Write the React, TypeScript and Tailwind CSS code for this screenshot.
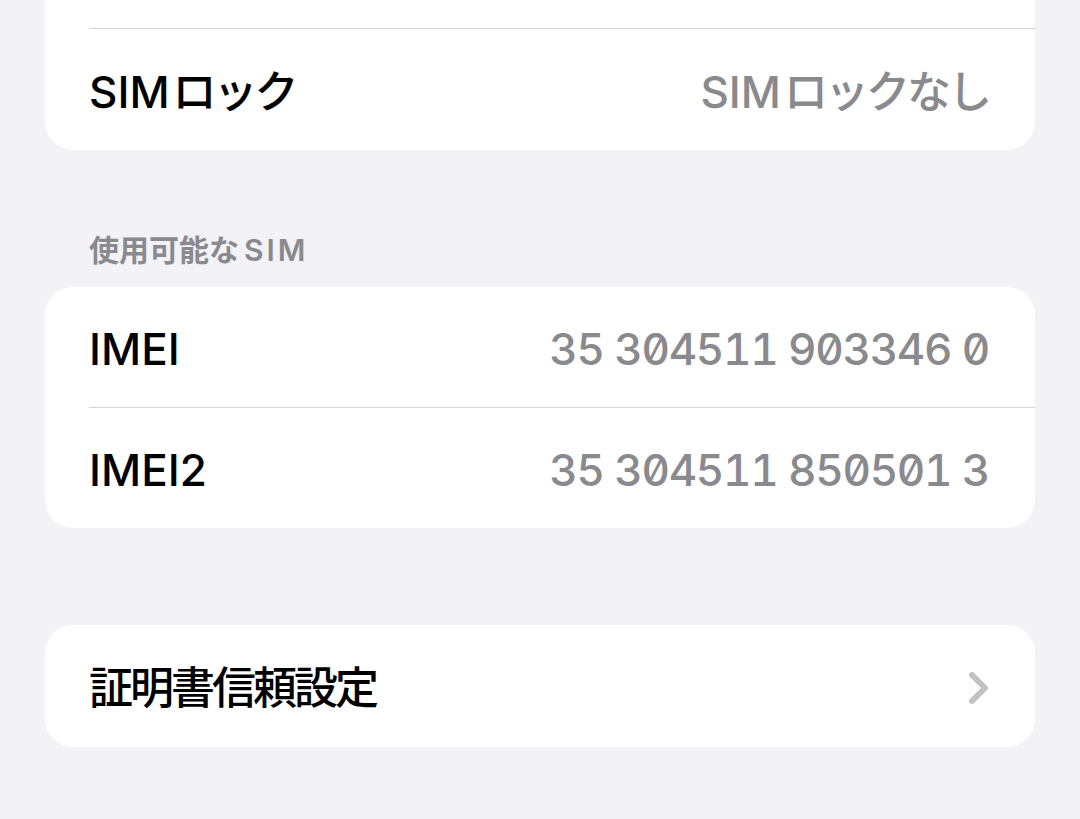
import React from 'react';

const font = { fontFamily: '"Inter", "Noto Sans CJK JP", sans-serif' };

const Row = ({ label, value, mono = false, chevron = false, divider = false, height = 'h-[120px]' }: {
  label: React.ReactNode;
  value?: React.ReactNode;
  mono?: boolean;
  chevron?: boolean;
  divider?: boolean;
  height?: string;
}) => (
  <div className="pl-[44px]">
    <div className={`${height} flex items-center justify-between pr-[46px] pt-[4px] ${divider ? 'border-t border-[#d4d4d8]' : ''}`}>
      <span className="text-[44px] font-medium text-black leading-none">{label}</span>
      {value && (
        <span
          className={`text-[44px] font-medium text-[#8a8a8e] leading-none ${mono ? 'tabular-nums slashed-zero tracking-[-1.3px]' : ''}`}
        >
          {value}
        </span>
      )}
      {chevron && (
        <svg width="22" height="34" viewBox="0 0 22 34" className="mr-[-1px]">
          <polyline
            points="4,4 17,17 4,30"
            fill="none"
            stroke="#c2c2c5"
            strokeWidth="6"
            strokeLinecap="round"
            strokeLinejoin="round"
          />
        </svg>
      )}
    </div>
  </div>
);

const Jp = ({ children }: { children: React.ReactNode }) => (
  <span className="tracking-[-3px]">{children}</span>
);

export default function App() {
  return (
    <div className="w-[1080px] h-[819px] bg-[#f2f2f7] px-[45px] overflow-hidden" style={font}>
      {/* top card, cut off by the screen edge */}
      <div className="bg-white rounded-b-[28px]">
        <div className="h-[28px]" />
        <Row
          label={<>SIM<span className="ml-[3px]"><Jp>ロック</Jp></span></>}
          value={<>SIM<span className="ml-[3px]"><Jp>ロックなし</Jp></span></>}
          divider
          height="h-[122px]"
        />
      </div>

      <div className="pl-[44px] pt-[82px] pb-[19px]">
        <span className="text-[30px] leading-[36px] font-semibold text-[#8a8a8e]">
          <span>使用可能な</span>
          <span className="ml-[5px] tracking-[3px]">SIM</span>
        </span>
      </div>

      <div className="bg-white rounded-[28px]">
        <Row label="IMEI" value="35 304511 903346 0" mono />
        <Row label="IMEI2" value="35 304511 850501 3" mono divider height="h-[121px]" />
      </div>

      <div className="mt-[97px] bg-white rounded-[28px]">
        <Row label={<Jp>証明書信頼設定</Jp>} chevron height="h-[122px]" />
      </div>
    </div>
  );
}
